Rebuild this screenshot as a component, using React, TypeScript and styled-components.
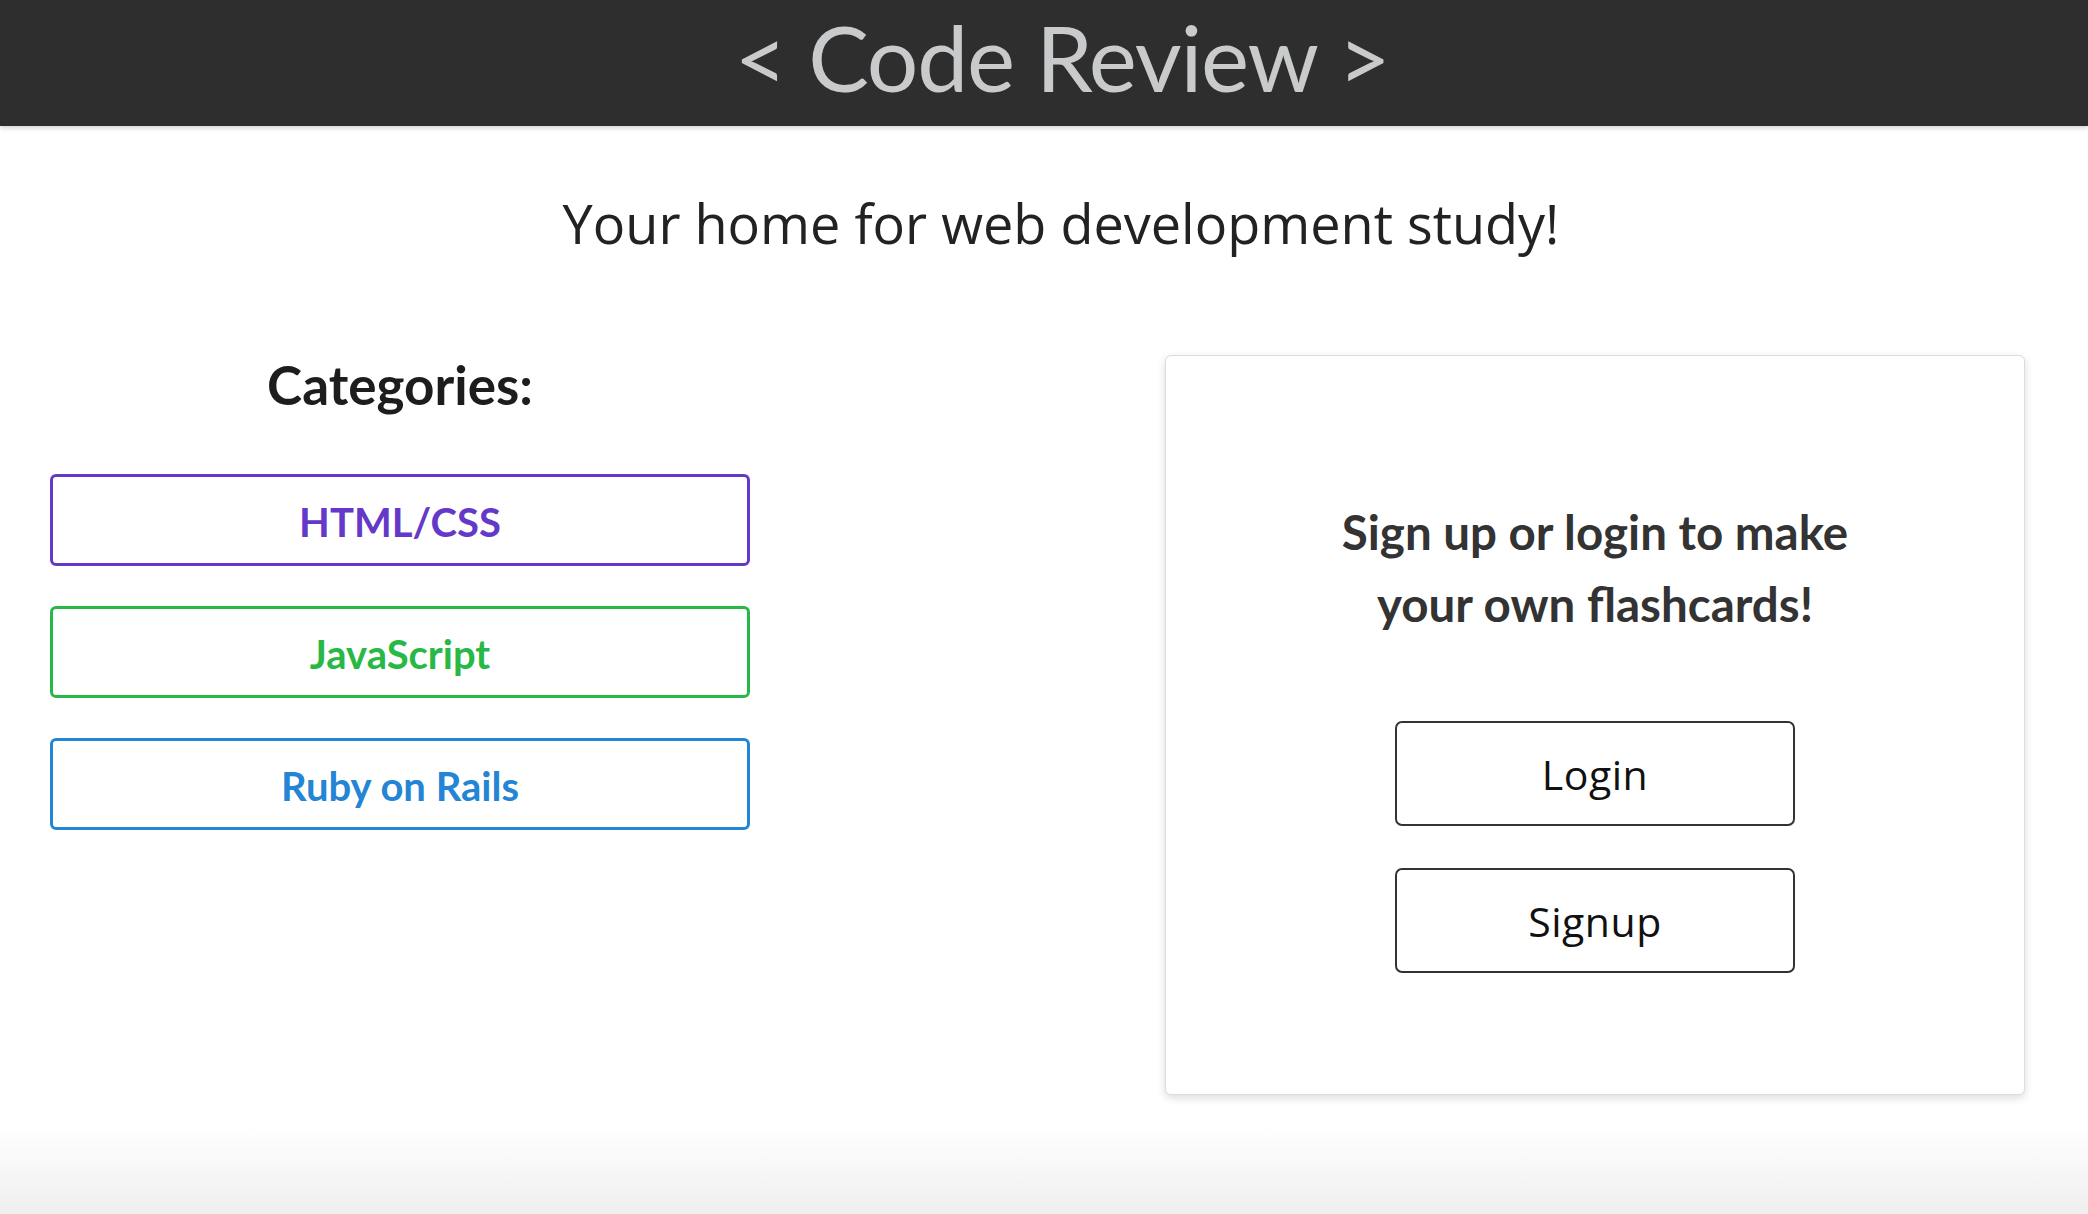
import React from "react";
import styled, { createGlobalStyle } from "styled-components";

const GlobalStyle = createGlobalStyle`
  html, body {
    margin: 0;
    padding: 0;
  }
  body {
    font-family: "Open Sans", "Liberation Sans", sans-serif;
    background: #ffffff;
  }
  * { box-sizing: border-box; }
`;

const Page = styled.div`
  min-height: 100vh;
  display: flex;
  flex-direction: column;
  background: linear-gradient(to bottom, #ffffff 0, #ffffff calc(100% - 90px), #efefef 100%);
`;

const Header = styled.header`
  height: 126px;
  background: #2e2e2e;
  display: flex;
  justify-content: center;
  align-items: flex-start;
  padding-left: 36px;
  box-shadow: 0 2px 5px rgba(0, 0, 0, 0.18);
  position: relative;
  z-index: 1;
`;

const Title = styled.h1`
  margin: 0;
  font-family: Lato, "Liberation Sans", sans-serif;
  font-weight: 400;
  font-size: 91px;
  line-height: 114px;
  color: #c9cacc;
  letter-spacing: -1.2px;
`;

const Tagline = styled.p`
  margin: 70px 0 0;
  padding-left: 34px;
  text-align: center;
  font-family: "Open Sans", "Liberation Sans", sans-serif;
  font-size: 54px;
  line-height: 54px;
  color: #222222;
`;

const Main = styled.main`
  display: flex;
  align-items: flex-start;
  margin-top: 105px;
  padding-right: 63px;
`;

const Column = styled.section`
  width: 800px;
  padding: 3px 50px 0;
  display: flex;
  flex-direction: column;
  align-items: stretch;
`;

const Heading = styled.h2`
  margin: 0 0 62px;
  text-align: center;
  font-family: Lato, "Liberation Sans", sans-serif;
  font-weight: 700;
  font-size: 53px;
  line-height: 54px;
  color: #1d1d1d;
`;

const CategoryList = styled.div`
  display: flex;
  flex-direction: column;
  gap: 40px;
`;

const CategoryButton = styled.button<{ $color: string }>`
  height: 92px;
  width: 100%;
  background: #ffffff;
  border: 3px solid ${(p) => p.$color};
  border-radius: 6px;
  color: ${(p) => p.$color};
  font-family: Lato, "Liberation Sans", sans-serif;
  font-weight: 700;
  font-size: 40px;
  cursor: pointer;
  padding: 3px 0 0;
`;

const Card = styled.section`
  margin-left: auto;
  width: 860px;
  background: #ffffff;
  border: 1px solid #dcdcdc;
  border-radius: 6px;
  box-shadow: 0 3px 8px rgba(0, 0, 0, 0.14);
  padding: 140px 0 121px;
  display: flex;
  flex-direction: column;
  align-items: center;
`;

const CardText = styled.p`
  margin: 0 0 81px;
  text-align: center;
  font-family: Lato, "Liberation Sans", sans-serif;
  font-weight: 700;
  font-size: 47.5px;
  line-height: 72px;
  color: #333333;
`;

const AuthButtons = styled.div`
  display: flex;
  flex-direction: column;
  gap: 42px;
`;

const AuthButton = styled.button`
  width: 400px;
  height: 105px;
  background: #ffffff;
  border: 2px solid #333333;
  border-radius: 7px;
  font-family: "Open Sans", "Liberation Sans", sans-serif;
  font-size: 41px;
  color: #111111;
  cursor: pointer;
  padding: 0;
  letter-spacing: 0.5px;
`;

const categories = [
  { name: "HTML/CSS", color: "#6438c9" },
  { name: "JavaScript", color: "#27b846" },
  { name: "Ruby on Rails", color: "#2385d3" },
];

export default function App() {
  return (
    <Page>
      <GlobalStyle />
      <Header>
        <Title>&lt; Code Review &gt;</Title>
      </Header>
      <Tagline>Your home for web development study!</Tagline>
      <Main>
        <Column>
          <Heading>Categories:</Heading>
          <CategoryList>
            {categories.map((c) => (
              <CategoryButton key={c.name} $color={c.color}>
                {c.name}
              </CategoryButton>
            ))}
          </CategoryList>
        </Column>
        <Card>
          <CardText>
            Sign up or login to make
            <br />
            your own flashcards!
          </CardText>
          <AuthButtons>
            <AuthButton>Login</AuthButton>
            <AuthButton>Signup</AuthButton>
          </AuthButtons>
        </Card>
      </Main>
    </Page>
  );
}
